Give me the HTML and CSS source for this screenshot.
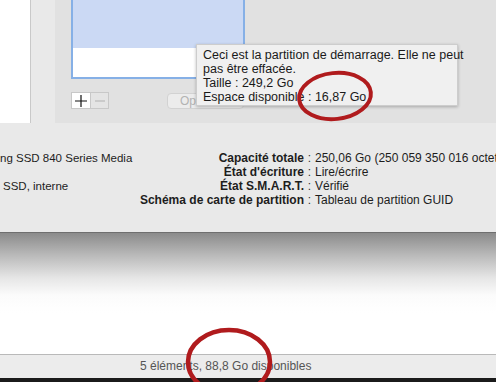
FILE: index.html
```html
<!DOCTYPE html>
<html lang="fr">
<head>
    <meta charset="UTF-8">
    <title>Utilitaire de disque</title>
    <link rel="stylesheet" href="styles.css">
</head>
<body>
    <div class="window">
        <div class="top">
            <div class="sidebar"></div>
            <div class="spacer"></div>
            <div class="pane">
                <div class="list"></div>
                <div class="buttons">
                    <div class="seg">
                        <span class="seg-btn plus">
                            <svg width="14" height="14" viewBox="0 0 14 14"><path d="M7 1v12M1 7h12" stroke="#111" stroke-width="1.2"/></svg>
                        </span>
                        <span class="seg-btn minus">
                            <svg width="14" height="14" viewBox="0 0 14 14"><path d="M2 7h10" stroke="#b9b9b9" stroke-width="1.2"/></svg>
                        </span>
                    </div>
                    <span class="options">Options…</span>
                </div>
            </div>
        </div>

        <div class="info">
            <div class="disk-col">
                <div class="row">ng SSD 840 Series Media</div>
                <div class="row"></div>
                <div class="row indent">SSD, interne</div>
                <div class="row"></div>
            </div>
            <div class="props">
                <span class="label">Capacité totale</span><span class="colon">:</span><span class="value">250,06 Go (250 059 350 016 octets)</span>
                <span class="label">État d'écriture</span><span class="colon">:</span><span class="value">Lire/écrire</span>
                <span class="label">État S.M.A.R.T.</span><span class="colon">:</span><span class="value">Vérifié</span>
                <span class="label">Schéma de carte de partition</span><span class="colon">:</span><span class="value">Tableau de partition GUID</span>
            </div>
        </div>

        <div class="finder"></div>
        <div class="status">5 éléments, 88,8 Go disponibles</div>
        <div class="desktop"></div>
    </div>

    <div class="tooltip">
        <div>Ceci est la partition de démarrage. Elle ne peut</div>
        <div>pas être effacée.</div>
        <div>Taille : 249,2 Go</div>
        <div>Espace disponible : 16,87 Go</div>
    </div>

    <!-- annotations -->
    <svg class="mark mark-top" width="90" height="64" viewBox="0 0 90 64">
        <ellipse cx="45" cy="32" rx="36" ry="23" transform="rotate(-6 45 32)" fill="none" stroke="#b01b1d" stroke-width="4"/>
    </svg>
    <svg class="mark mark-bottom" width="96" height="60" viewBox="0 0 96 60">
        <ellipse cx="48" cy="37" rx="41" ry="32" fill="none" stroke="#b01b1d" stroke-width="4.5"/>
    </svg>
</body>
</html>
```

FILE: styles.css
```css
body {
    margin: 0;
    width: 496px;
    height: 382px;
    overflow: hidden;
    position: relative;
    font-family: "Liberation Sans", Arial, sans-serif;
    color: #1d1d1d;
    background-color: #e9e9e9;
}
.window {
    display: flex;
    flex-direction: column;
    height: 382px;
}
.top {
    display: flex;
    height: 123px;
}
.sidebar {
    width: 30px;
    background-color: #ffffff;
    border-right: 1px solid #c9c9c9;
}
.spacer {
    width: 24px;
    background-color: #e9e9e9;
}
.pane {
    flex: 1;
    background-color: #e1e1e1;
    padding-left: 16px;
}
.list {
    width: 174px;
    height: 79px;
    box-sizing: border-box;
    border: 2px solid #86b0e6;
    border-top: none;
    background: linear-gradient(to bottom, #cbd9f4 0, #cbd9f4 48px, #ffffff 48px);
}
.buttons {
    display: flex;
    align-items: center;
    margin-top: 13px;
}
.seg {
    display: flex;
}
.seg-btn {
    display: flex;
    align-items: center;
    justify-content: center;
    height: 17px;
    box-sizing: border-box;
    border: 1px solid #c8c8c8;
}
.plus {
    width: 20px;
    background-color: #ffffff;
}
.minus {
    width: 18px;
    border-left: none;
    background-color: #e4e4e4;
}
.options {
    margin-left: 58px;
    width: 77px;
    height: 16px;
    box-sizing: border-box;
    border: 1px solid #d2d2d2;
    border-radius: 4px;
    background-color: #ececec;
    color: #b3b3b3;
    font-size: 12px;
    line-height: 14px;
    padding-left: 12px;
}
.info {
    display: flex;
    align-items: flex-start;
    height: 109px;
    box-sizing: border-box;
    padding-top: 28px;
    background-color: #e9e9e9;
    font-size: 11.5px;
    line-height: 14px;
}
.disk-col {
    width: 130px;
}
.row {
    height: 14px;
    white-space: nowrap;
}
.indent {
    padding-left: 3px;
}
.props {
    display: grid;
    grid-template-columns: 174px 11px auto;
    grid-auto-rows: 14px;
    align-content: start;
    font-size: 12px;
    white-space: nowrap;
}
.label {
    font-weight: bold;
    text-align: right;
}
.colon {
    text-align: center;
    color: #333;
}
.finder {
    height: 121px;
    border-top: 1px solid #6f6f6f;
    background: linear-gradient(to bottom, #8b8b8b 0, #b9b9b9 22px, #e6e6e6 45px, #fbfbfb 62px, #ffffff 80px);
}
.status {
    height: 23px;
    border-top: 1px solid #b9b9b9;
    background-color: #ececec;
    color: #555555;
    font-size: 12px;
    line-height: 23px;
    padding-left: 140px;
}
.desktop {
    flex: 1;
    background-color: #1b1b1b;
}
.tooltip {
    position: absolute;
    left: 196px;
    top: 44px;
    width: 262px;
    height: 62px;
    box-sizing: border-box;
    padding: 3px 6px;
    background-color: #f0f0f0;
    border: 1px solid #cdcdcd;
    box-shadow: 0 1px 3px rgba(0, 0, 0, 0.25);
    font-size: 12.5px;
    line-height: 14px;
    color: #1a1a1a;
    white-space: nowrap;
}
.mark {
    position: absolute;
}
.mark-top {
    left: 290px;
    top: 64px;
}
.mark-bottom {
    left: 181px;
    top: 325px;
}
```
